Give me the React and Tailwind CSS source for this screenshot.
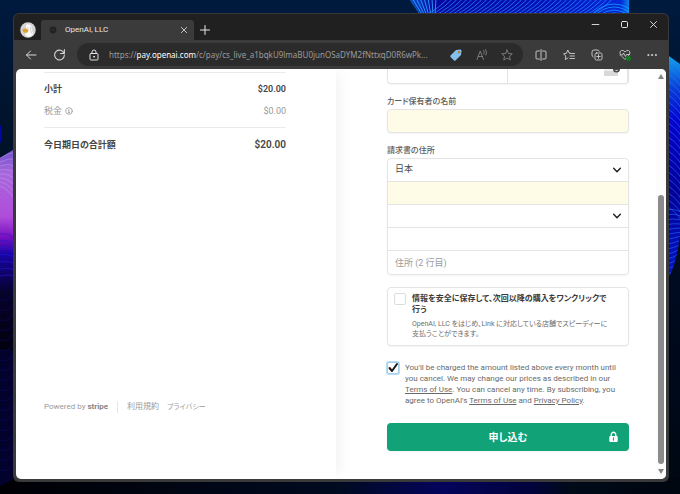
import { useState } from 'react'
import clsx from 'clsx'

const waves = Array.from({ length: 34 }, (_, i) => i)

function Wallpaper() {
  return (
    <svg
      className="absolute inset-0 h-full w-full"
      viewBox="0 0 680 494"
      preserveAspectRatio="none"
      aria-hidden="true"
    >
      <defs>
        <linearGradient id="sky" x1="0" y1="0" x2="0" y2="1">
          <stop offset="0" stopColor="#001a3e" />
          <stop offset="0.3" stopColor="#001228" />
          <stop offset="0.6" stopColor="#000a20" />
          <stop offset="1" stopColor="#000812" />
        </linearGradient>
        <linearGradient id="petalTop" x1="0" y1="0" x2="1" y2="0">
          <stop offset="0" stopColor="#0a6fe0" />
          <stop offset="0.15" stopColor="#0508a0" />
          <stop offset="0.6" stopColor="#0410b8" />
          <stop offset="0.96" stopColor="#0428d8" />
          <stop offset="1" stopColor="#0a90f0" />
        </linearGradient>
        <linearGradient id="petalRight" x1="0" y1="0" x2="0" y2="1">
          <stop offset="0" stopColor="#10b8f0" />
          <stop offset="0.16" stopColor="#0840d8" />
          <stop offset="0.3" stopColor="#0404d0" />
          <stop offset="0.6" stopColor="#020298" />
          <stop offset="1" stopColor="#0418c8" />
        </linearGradient>
        <linearGradient id="petalLeft" x1="0" y1="0" x2="0" y2="1">
          <stop offset="0" stopColor="#6a50c8" />
          <stop offset="0.12" stopColor="#a868dc" />
          <stop offset="0.32" stopColor="#b050d8" />
          <stop offset="0.42" stopColor="#7a10c0" />
          <stop offset="0.5" stopColor="#1804a8" />
          <stop offset="0.68" stopColor="#06022c" />
          <stop offset="1" stopColor="#010108" />
        </linearGradient>
        <linearGradient id="ground" x1="0" y1="0" x2="1" y2="0">
          <stop offset="0" stopColor="#000004" />
          <stop offset="0.5" stopColor="#000a20" />
          <stop offset="0.65" stopColor="#04045c" />
          <stop offset="0.78" stopColor="#02023c" />
          <stop offset="0.84" stopColor="#000a18" />
          <stop offset="1" stopColor="#000610" />
        </linearGradient>
        <clipPath id="clipTop">
          <path d="M410 0H629V16H421Z" />
        </clipPath>
        <clipPath id="clipRight">
          <path d="M666 54L680 64V235Q676 268 666 282Z" />
        </clipPath>
      </defs>
      <rect width="680" height="494" fill="url(#sky)" />
      <rect x="0" y="478" width="680" height="16" fill="url(#ground)" />
      <ellipse cx="0" cy="134" rx="2" ry="9" fill="#0804a0" />
      <path d="M0 158L16 148V360H0Z" fill="url(#petalLeft)" />
      <path d="M0 350H16V478L0 486Z" fill="#02022c" />
      {waves.slice(0, 14).map((i) => (
        <path
          key={i}
          d={`M0 ${158 + i * 4}Q8 ${153 + i * 5} 16 ${152 + i * 7}`}
          stroke={i < 8 ? '#d8b0ff' : '#b03cf0'}
          strokeOpacity="0.35"
          fill="none"
        />
      ))}
      {waves.slice(0, 7).map((i) => (
        <path key={i} d={`M0 ${234 + i * 7}Q8 ${232 + i * 7} 16 ${240 + i * 6}`} stroke="#2818d0" strokeOpacity="0.6" fill="none" />
      ))}
      {waves.slice(0, 18).map((i) => (
        <path key={i} d={`M0 ${300 + i * 10}Q10 ${304 + i * 10} 16 ${288 + i * 10}`} stroke="#0a0860" strokeOpacity="0.7" fill="none" />
      ))}
      <g clipPath="url(#clipTop)">
        <rect x="400" y="0" width="230" height="16" fill="url(#petalTop)" />
        {waves.slice(0, 8).map((i) => (
          <path key={i} d={`M${408 + i * 4} -2L${421 + i * 2} 16`} stroke="#30b0ff" strokeOpacity="0.8" fill="none" />
        ))}
        {waves.map((i) => (
          <path
            key={i}
            d={`M${424 + i * 5} 16Q${440 + i * 5} 8 ${450 + i * 5} -4`}
            stroke="#2890ff"
            strokeOpacity="0.75"
            fill="none"
          />
        ))}
        {waves.slice(0, 5).map((i) => (
          <path key={i} d={`M${590 + i * 4} 16Q614 ${-8 + i * 6} ${638 - i * 4} 16`} stroke="#10b0ff" strokeOpacity="0.7" fill="none" />
        ))}
      </g>
      <g clipPath="url(#clipRight)">
        <rect x="664" y="50" width="16" height="236" fill="url(#petalRight)" />
        {waves.slice(0, 22).map((i) => (
          <path
            key={i}
            d={`M664 ${58 + i * 7}Q674 ${62 + i * 7} 682 ${74 + i * 7}`}
            stroke="#4a78f8"
            strokeOpacity="0.5"
            fill="none"
          />
        ))}
        {waves.slice(0, 14).map((i) => (
          <path key={i} d={`M664 ${210 + i * 5}Q674 ${208 + i * 5} 682 ${212 + i * 4}`} stroke="#2868f8" strokeOpacity="0.6" fill="none" />
        ))}
      </g>
    </svg>
  )
}

function Icon({ size = 'size-3', strokeWidth = 1.7, children, className }) {
  return (
    <svg
      viewBox="0 0 24 24"
      className={clsx('shrink-0', size, className)}
      fill="none"
      stroke="currentColor"
      strokeWidth={strokeWidth}
      strokeLinecap="round"
      strokeLinejoin="round"
      aria-hidden="true"
    >
      {children}
    </svg>
  )
}

function IconButton({ label, className, children }) {
  return (
    <button type="button" aria-label={label} className={clsx('flex shrink-0 items-center justify-center', className)}>
      {children}
    </button>
  )
}

function Avatar() {
  return (
    <svg viewBox="0 0 32 32" className="size-4 shrink-0" aria-hidden="true">
      <circle cx="16" cy="16" r="15.5" fill="#d4d4d4" />
      <path d="M12 6Q19 2 23 9Q23 17 26 22Q26 28 17 30Q9 28 11 22Q15 19 12 14Z" fill="#fafafa" />
      <path d="M21 10Q20 17 24 23" stroke="#aaa" strokeWidth="1" fill="none" />
      <path d="M5 15Q11 11 17 16Q16 22 11 22Q5 21 5 15Z" fill="#e0a030" />
      <circle cx="16" cy="12" r="0.9" fill="#666" />
    </svg>
  )
}

function TitleBar() {
  return (
    <div className="flex h-[26px] shrink-0 items-end bg-[#202020]">
      <button type="button" aria-label="Profile" className="ml-[6px] flex h-5 items-center">
        <Avatar />
      </button>
      <div className="ml-[5px] flex h-5 w-[153px] items-center rounded-t-[3px] bg-[#3b3b3b] pr-[6px] pl-2 text-[#e8e8e8]">
        <svg viewBox="0 0 8 8" className="size-2 shrink-0" aria-hidden="true">
          <circle cx="4" cy="4" r="3.4" fill="#222" />
          <circle cx="4" cy="4" r="1.4" fill="#2c2c2c" />
        </svg>
        <span className="ml-2 flex-1 text-[8px]">OpenAI, LLC</span>
        <IconButton label="Close tab">
          <Icon size="size-2" strokeWidth={2.4}>
            <path d="M4 4L20 20M20 4L4 20" />
          </Icon>
        </IconButton>
      </div>
      <IconButton label="New tab" className="ml-[5px] h-5 text-[#e8e8e8]">
        <Icon strokeWidth={2}>
          <path d="M12 3V21M3 12H21" />
        </Icon>
      </IconButton>
      <div className="mr-[10px] mb-auto ml-auto flex h-5 items-center gap-5 text-[#e8e8e8]">
        <IconButton label="Minimize">
          <Icon size="size-[9px]" strokeWidth={2.4}>
            <path d="M3 12H21" />
          </Icon>
        </IconButton>
        <IconButton label="Maximize">
          <Icon size="size-[9px]" strokeWidth={2.6}>
            <rect x="4" y="4" width="16" height="16" rx="3" />
          </Icon>
        </IconButton>
        <IconButton label="Close">
          <Icon size="size-[9px]" strokeWidth={2.4}>
            <path d="M4 4L20 20M20 4L4 20" />
          </Icon>
        </IconButton>
      </div>
    </div>
  )
}

function Toolbar() {
  return (
    <div className="flex h-[29px] shrink-0 items-center bg-[#3b3b3b] px-[11px] text-[#d8d8d8]">
      <IconButton label="Back">
        <Icon strokeWidth={2}>
          <path d="M22 12H3M11 4L3 12L11 20" />
        </Icon>
      </IconButton>
      <IconButton label="Refresh" className="ml-4">
        <Icon size="size-[13px]" strokeWidth={2}>
          <path d="M20.5 10A9 9 0 1 0 21 13M21 3V10H14" />
        </Icon>
      </IconButton>
      <div className="ml-[11px] flex h-[23px] min-w-0 flex-1 items-center rounded-full bg-[#2b2b2b] pr-[10px] pl-[11px]">
        <Icon className="text-[#e0e0e0]" strokeWidth={2}>
          <rect x="4" y="9" width="16" height="13" rx="2" />
          <path d="M8 9V6A4 4 0 0 1 16 6V9" />
          <circle cx="12" cy="15.5" r="1" fill="currentColor" />
        </Icon>
        <p className="ml-[9px] min-w-0 flex-1 font-['Noto_Sans',sans-serif] text-[8px] whitespace-nowrap text-[#9b9b9b]">
          https://<span className="text-white">pay.openai.com</span>/c/pay/cs_live_a1bqkU9lmaBU0junOSaDYM2fNttxqD0R6wPk...
        </p>
        <IconButton label="Shopping" className="ml-2">
          <svg viewBox="0 0 24 24" className="size-3" aria-hidden="true">
            <path d="M12 2L21 1Q23 1 23 4L22 12L11 23Q10 24 8 23L1 16Q0 14 1 13Z" fill="#84c0f0" />
            <circle cx="18" cy="6.5" r="2.5" fill="#b8841a" />
          </svg>
        </IconButton>
        <IconButton label="Read aloud" className="ml-[14px] text-[#868686]">
          <Icon>
            <path d="M2 21L8.500 4L15 21M4.500 15H12.500" />
            <path d="M15 3Q18 6 16 10M19 1Q23 6 20 12" />
          </Icon>
        </IconButton>
        <IconButton label="Favorite" className="ml-[13px] text-[#868686]">
          <Icon>
            <path d="M12 2L15 9L22.500 9.500L17 14.500L18.500 22L12 18L5.500 22L7 14.500L1.500 9.500L9 9Z" />
          </Icon>
        </IconButton>
      </div>
      <div className="ml-3 flex items-center gap-4">
        <IconButton label="Split screen">
          <Icon>
            <path d="M9 4H4Q2 4 2 6V18Q2 20 4 20H9M15 4H20Q22 4 22 6V18Q22 20 20 20H15M12 1V23" />
          </Icon>
        </IconButton>
        <IconButton label="Favorites">
          <Icon>
            <path d="M14 8L12.500 8L9.500 2L7 8.500L1 9.500L5.500 14L4.500 21L10 18M14 9H23M14 14H23M14 19H23" />
          </Icon>
        </IconButton>
        <IconButton label="Collections">
          <Icon>
            <rect x="8" y="8" width="14" height="14" rx="3" />
            <path d="M15 11.500V18.500M11.500 15H18.500M4.500 16Q2 15 2 12V6Q2 2 6 2H12Q16 2 16.500 4.500" />
          </Icon>
        </IconButton>
        <IconButton label="Browser essentials">
          <Icon>
            <path d="M3 11Q0 5 5 3Q9 2 12 6Q15 2 19 3Q24 5 21 11L12 21L6 15M2 12H7L9 8L13 15L15 11H20" />
            <circle cx="19" cy="19" r="4.500" fill="#137a20" stroke="#137a20" />
          </Icon>
        </IconButton>
        <IconButton label="More">
          <Icon size="size-[10px]">
            <circle cx="3" cy="12" r="1.500" fill="currentColor" />
            <circle cx="12" cy="12" r="1.500" fill="currentColor" />
            <circle cx="21" cy="12" r="1.500" fill="currentColor" />
          </Icon>
        </IconButton>
      </div>
    </div>
  )
}

function Summary() {
  return (
    <section className="flex flex-col pt-[3px] pr-[50px] pb-[66px] pl-7 shadow-[8px_0_12px_-4px_rgba(0,0,0,0.05)]">
      <dl className="text-[9px] leading-[12px]">
        <div className="flex justify-between border-t border-[#ebebeb] pt-[10px] font-semibold text-[#444]">
          <dt>小計</dt>
          <dd>$20.00</dd>
        </div>
        <div className="flex justify-between pt-[10px] pb-[10px] text-[#9a9a9a]">
          <dt className="flex items-center gap-[3px]">
            税金
            <Icon size="size-2" strokeWidth={2.4}>
              <circle cx="12" cy="12" r="10" />
              <path d="M10 11H12V17M12 7V7.500M10 17H14" />
            </Icon>
          </dt>
          <dd>$0.00</dd>
        </div>
        <div className="flex justify-between border-t border-[#ebebeb] pt-[11px] font-semibold text-[#444]">
          <dt>今日期日の合計額</dt>
          <dd className="text-[10px]">$20.00</dd>
        </div>
      </dl>
      <footer className="mt-auto flex items-center text-[8px] leading-[12px] text-[#9a9a9a]">
        <a href="#stripe">
          Powered by <b className="font-bold text-[#858585]">stripe</b>
        </a>
        <span className="mx-[9px] h-3 w-px bg-[#e6e6e6]" />
        <a href="#terms">利用規約</a>
        <a href="#privacy" className="ml-2 text-[7px]">
          プライバシー
        </a>
      </footer>
    </section>
  )
}

function Chevron() {
  return (
    <Icon size="size-[10px]" strokeWidth={3.5} className="pointer-events-none absolute top-[6px] right-[6px] text-[#222]">
      <path d="M4 8L12 16L20 8" />
    </Icon>
  )
}

const rowClass = 'block h-full w-full appearance-none bg-transparent px-[7px] text-[9px] text-[#4a4a4a] outline-none placeholder:text-[#9c9c9c]'

function BillingForm() {
  const [save, setSave] = useState(false)
  const [agree, setAgree] = useState(true)

  return (
    <form className="flex flex-col pr-[27px] pb-7 pl-[51px]" onSubmit={(e) => e.preventDefault()}>
      <div className="relative grid h-[15px] grid-cols-2 divide-x divide-[#e4e4e4] rounded-b-[4px] border border-t-0 border-[#e4e4e4] shadow-xs">
        <input aria-label="有効期限" className="min-w-0 px-2 text-[9px] outline-none" />
        <input aria-label="セキュリティコード" className="min-w-0 px-2 text-[9px] outline-none" />
        <svg viewBox="0 0 16 8" className="absolute top-0 right-2 h-2 w-4" aria-hidden="true">
          <path d="M0 0H14V6Q14 7 13 7H1Q0 7 0 6Z" fill="#d8d8d8" />
          <path d="M0 0H14V2H0Z" fill="#eee" />
          <path d="M9 0A3.500 3.500 0 0 0 16 0Z" fill="#4a4a4a" />
          <path d="M11.500 1.500H13.500" stroke="#fff" strokeWidth="0.800" />
        </svg>
      </div>

      <label htmlFor="holder" className="mt-[13px] text-[8px] leading-[10px] font-medium text-[#5c5c5c]">
        カード保有者の名前
      </label>
      <input
        id="holder"
        className="mt-[2px] h-6 w-full rounded-[4px] border border-[#e4e4e4] bg-[#fefbe6] px-[7px] text-[9px] shadow-xs outline-none"
      />

      <fieldset className="mt-[13px]">
        <legend className="text-[8px] leading-[10px] font-medium text-[#5c5c5c]">請求書の住所</legend>
        <div className="mt-[2px] flex flex-col divide-y divide-[#e4e4e4] overflow-hidden rounded-[4px] border border-[#e4e4e4] shadow-xs">
          <div className="relative h-[23px]">
            <select aria-label="国" className={rowClass} defaultValue="jp">
              <option value="jp">日本</option>
            </select>
            <Chevron />
          </div>
          <div className="h-[23px] bg-[#fefbe6]">
            <input aria-label="郵便番号" className={rowClass} />
          </div>
          <div className="relative h-[23px]">
            <select aria-label="都道府県" className={rowClass} defaultValue="">
              <option value="" />
            </select>
            <Chevron />
          </div>
          <div className="h-[23px]">
            <input aria-label="住所 (1 行目)" className={rowClass} />
          </div>
          <div className="h-[23px]">
            <input aria-label="住所 (2 行目)" placeholder="住所 (2 行目)" className={rowClass} />
          </div>
        </div>
      </fieldset>

      <div className="mt-3 flex gap-[6px] rounded-[4px] border border-[#e4e4e4] px-[6px] pt-[5px] pb-[6px] shadow-xs">
        <input
          id="save"
          type="checkbox"
          checked={save}
          onChange={(e) => setSave(e.target.checked)}
          className="size-3 shrink-0 appearance-none rounded-[2px] border border-[#dcdcdc] bg-white checked:bg-[#333]"
        />
        <div className="min-w-0">
          <label htmlFor="save" className="block text-[8px] leading-[11px] font-semibold text-[#3a3a3a]">
            情報を安全に保存して、次回以降の購入をワンクリックで
            <br />
            行う
          </label>
          <p className="mt-1 text-[7px] leading-[10px] text-[#6c6c6c]">
            OpenAI, LLC をはじめ、Link に対応している店舗でスピーディーに
            <br />
            支払うことができます。
          </p>
        </div>
      </div>

      <div className="mt-4 flex gap-[6px]">
        <div className="relative size-3 shrink-0">
          <input
            id="agree"
            type="checkbox"
            checked={agree}
            onChange={(e) => setAgree(e.target.checked)}
            className="block size-3 appearance-none rounded-[2px] border border-[#a4d0ec] bg-white ring-1 ring-[#b4dcf4]"
          />
          {agree && (
            <Icon size="size-3" strokeWidth={4} className="pointer-events-none absolute inset-0 text-[#1a1a1a]">
              <path d="M5 12L10 18L20 4" />
            </Icon>
          )}
        </div>
        <label htmlFor="agree" className="text-[8px] leading-[11px] text-[#6a6a6a]">
          You'll be charged the amount listed above every month until you cancel. We may change our prices as described
          in our{' '}
          <a href="#terms" className="underline">
            Terms of Use
          </a>
          . You can cancel any time. By subscribing, you agree to OpenAI's{' '}
          <a href="#terms" className="underline">
            Terms of Use
          </a>{' '}
          and{' '}
          <a href="#privacy" className="underline">
            Privacy Policy
          </a>
          .
        </label>
      </div>

      <button
        type="submit"
        className="relative mt-[17px] h-7 w-full rounded-[4px] bg-[#11a277] text-[10px] font-semibold text-white shadow-xs"
      >
        申し込む
        <svg viewBox="0 0 16 20" className="absolute top-2 right-[11px] h-3 w-[9px]" aria-hidden="true">
          <path d="M4 9V5.500A4 4 0 0 1 12 5.500V9" fill="none" stroke="#fff" strokeWidth="2.400" />
          <rect x="0.500" y="8" width="15" height="11" rx="2" fill="#fff" />
          <path d="M8 11.500V15.500" stroke="#11a277" strokeWidth="2" strokeLinecap="round" />
        </svg>
      </button>
    </form>
  )
}

function Scrollbar() {
  return (
    <div className="flex w-[10px] shrink-0 flex-col items-center bg-[#fcfcfc] py-[5px]" aria-hidden="true">
      <svg viewBox="0 0 6 5" className="h-[5px] w-[6px]">
        <path d="M3 0L6 5H0Z" fill="#858585" />
      </svg>
      <div className="grow-30" />
      <div className="w-[6px] grow-70 rounded-full bg-[#8b8b8b]" />
      <svg viewBox="0 0 6 5" className="mt-[5px] h-[5px] w-[6px]">
        <path d="M3 5L6 0H0Z" fill="#858585" />
      </svg>
    </div>
  )
}

function App() {
  return (
    <div className="relative flex min-h-screen overflow-hidden bg-[#000a20] pt-[14px] pr-3 pb-[13px] pl-[14px] font-['Roboto','Noto_Sans_CJK_JP',sans-serif] [font-feature-settings:'palt']">
      <Wallpaper />
      <div className="relative flex min-w-0 flex-1 flex-col overflow-hidden rounded-[5px] bg-[#3b3b3b] ring-1 ring-[#383838]">
        <TitleBar />
        <Toolbar />
        <main className="mx-[2px] mb-[2px] flex flex-1 overflow-hidden rounded-[5px] bg-white">
          <div className="grid min-w-0 flex-1 grid-cols-2">
            <Summary />
            <BillingForm />
          </div>
          <Scrollbar />
        </main>
      </div>
    </div>
  )
}

export default App
